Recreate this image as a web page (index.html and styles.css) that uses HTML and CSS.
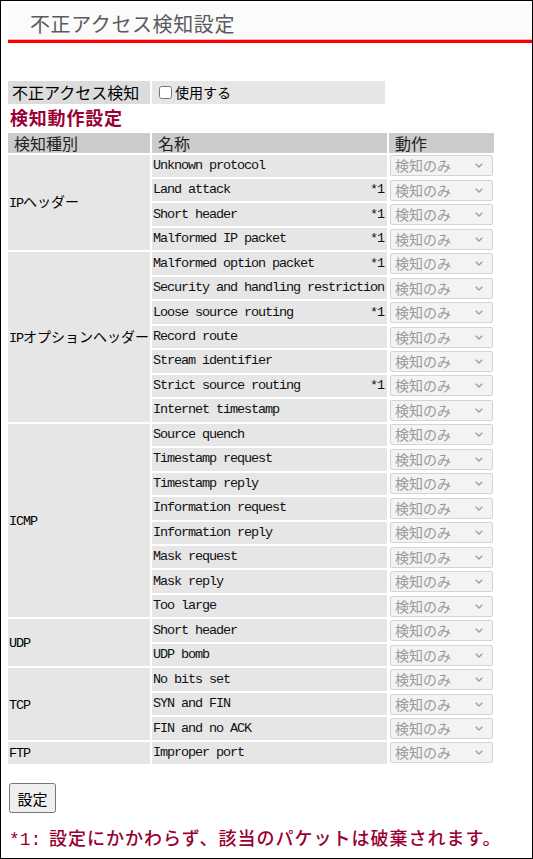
FILE: index.html
```html
<!DOCTYPE html>
<html lang="ja">
<head>
<meta charset="utf-8">
<title>不正アクセス検知設定</title>
<link rel="stylesheet" href="styles.css">
</head>
<body>
<div class="frame">
  <div class="page-head">不正アクセス検知設定</div>

  <table class="enable-table">
    <tr>
      <th class="enable-label">不正アクセス検知</th>
      <td class="enable-value"><label class="check"><input type="checkbox">使用する</label></td>
    </tr>
  </table>

  <h2 class="section-title">検知動作設定</h2>

  <table class="rules">
    <thead>
      <tr>
        <th class="c-kind">検知種別</th>
        <th class="c-name">名称</th>
        <th class="c-act">動作</th>
      </tr>
    </thead>
    <tbody>
      <tr><td class="kind" rowspan="4"><span class="lat">IP</span>ヘッダー</td><td class="name"><div class="nm"><span>Unknown protocol</span></div></td><td class="act"><span class="sel"><select disabled><option>検知のみ</option></select><svg viewBox="0 0 8 5" width="8" height="5"><path d="M0.7 0.7 L4 4 L7.3 0.7" /></svg></span></td></tr>
      <tr><td class="name"><div class="nm"><span>Land attack</span><span>*1</span></div></td><td class="act"><span class="sel"><select disabled><option>検知のみ</option></select><svg viewBox="0 0 8 5" width="8" height="5"><path d="M0.7 0.7 L4 4 L7.3 0.7" /></svg></span></td></tr>
      <tr><td class="name"><div class="nm"><span>Short header</span><span>*1</span></div></td><td class="act"><span class="sel"><select disabled><option>検知のみ</option></select><svg viewBox="0 0 8 5" width="8" height="5"><path d="M0.7 0.7 L4 4 L7.3 0.7" /></svg></span></td></tr>
      <tr><td class="name"><div class="nm"><span>Malformed IP packet</span><span>*1</span></div></td><td class="act"><span class="sel"><select disabled><option>検知のみ</option></select><svg viewBox="0 0 8 5" width="8" height="5"><path d="M0.7 0.7 L4 4 L7.3 0.7" /></svg></span></td></tr>

      <tr><td class="kind" rowspan="7"><span class="lat">IP</span>オプションヘッダー</td><td class="name"><div class="nm"><span>Malformed option packet</span><span>*1</span></div></td><td class="act"><span class="sel"><select disabled><option>検知のみ</option></select><svg viewBox="0 0 8 5" width="8" height="5"><path d="M0.7 0.7 L4 4 L7.3 0.7" /></svg></span></td></tr>
      <tr><td class="name"><div class="nm"><span>Security and handling restriction</span></div></td><td class="act"><span class="sel"><select disabled><option>検知のみ</option></select><svg viewBox="0 0 8 5" width="8" height="5"><path d="M0.7 0.7 L4 4 L7.3 0.7" /></svg></span></td></tr>
      <tr><td class="name"><div class="nm"><span>Loose source routing</span><span>*1</span></div></td><td class="act"><span class="sel"><select disabled><option>検知のみ</option></select><svg viewBox="0 0 8 5" width="8" height="5"><path d="M0.7 0.7 L4 4 L7.3 0.7" /></svg></span></td></tr>
      <tr><td class="name"><div class="nm"><span>Record route</span></div></td><td class="act"><span class="sel"><select disabled><option>検知のみ</option></select><svg viewBox="0 0 8 5" width="8" height="5"><path d="M0.7 0.7 L4 4 L7.3 0.7" /></svg></span></td></tr>
      <tr><td class="name"><div class="nm"><span>Stream identifier</span></div></td><td class="act"><span class="sel"><select disabled><option>検知のみ</option></select><svg viewBox="0 0 8 5" width="8" height="5"><path d="M0.7 0.7 L4 4 L7.3 0.7" /></svg></span></td></tr>
      <tr><td class="name"><div class="nm"><span>Strict source routing</span><span>*1</span></div></td><td class="act"><span class="sel"><select disabled><option>検知のみ</option></select><svg viewBox="0 0 8 5" width="8" height="5"><path d="M0.7 0.7 L4 4 L7.3 0.7" /></svg></span></td></tr>
      <tr><td class="name"><div class="nm"><span>Internet timestamp</span></div></td><td class="act"><span class="sel"><select disabled><option>検知のみ</option></select><svg viewBox="0 0 8 5" width="8" height="5"><path d="M0.7 0.7 L4 4 L7.3 0.7" /></svg></span></td></tr>

      <tr><td class="kind" rowspan="8"><span class="lat">ICMP</span></td><td class="name"><div class="nm"><span>Source quench</span></div></td><td class="act"><span class="sel"><select disabled><option>検知のみ</option></select><svg viewBox="0 0 8 5" width="8" height="5"><path d="M0.7 0.7 L4 4 L7.3 0.7" /></svg></span></td></tr>
      <tr><td class="name"><div class="nm"><span>Timestamp request</span></div></td><td class="act"><span class="sel"><select disabled><option>検知のみ</option></select><svg viewBox="0 0 8 5" width="8" height="5"><path d="M0.7 0.7 L4 4 L7.3 0.7" /></svg></span></td></tr>
      <tr><td class="name"><div class="nm"><span>Timestamp reply</span></div></td><td class="act"><span class="sel"><select disabled><option>検知のみ</option></select><svg viewBox="0 0 8 5" width="8" height="5"><path d="M0.7 0.7 L4 4 L7.3 0.7" /></svg></span></td></tr>
      <tr><td class="name"><div class="nm"><span>Information request</span></div></td><td class="act"><span class="sel"><select disabled><option>検知のみ</option></select><svg viewBox="0 0 8 5" width="8" height="5"><path d="M0.7 0.7 L4 4 L7.3 0.7" /></svg></span></td></tr>
      <tr><td class="name"><div class="nm"><span>Information reply</span></div></td><td class="act"><span class="sel"><select disabled><option>検知のみ</option></select><svg viewBox="0 0 8 5" width="8" height="5"><path d="M0.7 0.7 L4 4 L7.3 0.7" /></svg></span></td></tr>
      <tr><td class="name"><div class="nm"><span>Mask request</span></div></td><td class="act"><span class="sel"><select disabled><option>検知のみ</option></select><svg viewBox="0 0 8 5" width="8" height="5"><path d="M0.7 0.7 L4 4 L7.3 0.7" /></svg></span></td></tr>
      <tr><td class="name"><div class="nm"><span>Mask reply</span></div></td><td class="act"><span class="sel"><select disabled><option>検知のみ</option></select><svg viewBox="0 0 8 5" width="8" height="5"><path d="M0.7 0.7 L4 4 L7.3 0.7" /></svg></span></td></tr>
      <tr><td class="name"><div class="nm"><span>Too large</span></div></td><td class="act"><span class="sel"><select disabled><option>検知のみ</option></select><svg viewBox="0 0 8 5" width="8" height="5"><path d="M0.7 0.7 L4 4 L7.3 0.7" /></svg></span></td></tr>

      <tr><td class="kind" rowspan="2"><span class="lat">UDP</span></td><td class="name"><div class="nm"><span>Short header</span></div></td><td class="act"><span class="sel"><select disabled><option>検知のみ</option></select><svg viewBox="0 0 8 5" width="8" height="5"><path d="M0.7 0.7 L4 4 L7.3 0.7" /></svg></span></td></tr>
      <tr><td class="name"><div class="nm"><span>UDP bomb</span></div></td><td class="act"><span class="sel"><select disabled><option>検知のみ</option></select><svg viewBox="0 0 8 5" width="8" height="5"><path d="M0.7 0.7 L4 4 L7.3 0.7" /></svg></span></td></tr>

      <tr><td class="kind" rowspan="3"><span class="lat">TCP</span></td><td class="name"><div class="nm"><span>No bits set</span></div></td><td class="act"><span class="sel"><select disabled><option>検知のみ</option></select><svg viewBox="0 0 8 5" width="8" height="5"><path d="M0.7 0.7 L4 4 L7.3 0.7" /></svg></span></td></tr>
      <tr><td class="name"><div class="nm"><span>SYN and FIN</span></div></td><td class="act"><span class="sel"><select disabled><option>検知のみ</option></select><svg viewBox="0 0 8 5" width="8" height="5"><path d="M0.7 0.7 L4 4 L7.3 0.7" /></svg></span></td></tr>
      <tr><td class="name"><div class="nm"><span>FIN and no ACK</span></div></td><td class="act"><span class="sel"><select disabled><option>検知のみ</option></select><svg viewBox="0 0 8 5" width="8" height="5"><path d="M0.7 0.7 L4 4 L7.3 0.7" /></svg></span></td></tr>

      <tr><td class="kind"><span class="lat">FTP</span></td><td class="name"><div class="nm"><span>Improper port</span></div></td><td class="act"><span class="sel"><select disabled><option>検知のみ</option></select><svg viewBox="0 0 8 5" width="8" height="5"><path d="M0.7 0.7 L4 4 L7.3 0.7" /></svg></span></td></tr>
    </tbody>
  </table>

  <button class="submit" type="button">設定</button>

  <p class="note"><span class="note-mark">*1:</span>設定にかかわらず、該当のパケットは破棄されます。</p>
</div>
</body>
</html>
```

FILE: styles.css
```css
html, body {
  margin: 0;
  padding: 0;
  background: #fff;
}

body {
  font-family: "Noto Sans CJK JP", "Liberation Sans", sans-serif;
  color: #000;
}

.frame {
  box-sizing: border-box;
  width: 533px;
  height: 859px;
  border: 1px solid #000;
  padding: 3px 0 0 7px;
  overflow: hidden;
}

.page-head {
  height: 32px;
  padding: 4px 0 0 22px;
  line-height: 32px;
  font-size: 20px;
  letter-spacing: 0.6px;
  color: #5a5a5a;
  background: #fbfbfb;
  border-bottom: 3px solid #ff0000;
  box-shadow: inset 0 -1px 0 #f7b4b4;
  white-space: nowrap;
}

.enable-table {
  border-collapse: separate;
  border-spacing: 2px;
  margin: 36px 0 0 -2px;
}

.enable-label {
  box-sizing: border-box;
  width: 142px;
  height: 22px;
  padding: 0 0 0 4px;
  background: #dcdcdc;
  font-size: 16px;
  font-weight: normal;
  text-align: left;
  white-space: nowrap;
  line-height: 22px;
}

.enable-value {
  box-sizing: border-box;
  width: 233px;
  height: 22px;
  padding: 0 0 0 3px;
  background: #e6e6e6;
  font-size: 14px;
  line-height: 22px;
}

.check {
  display: inline-flex;
  align-items: center;
}

.check input {
  margin: 0 3px 0 4px;
  width: 13px;
  height: 13px;
}

.section-title {
  margin: 0;
  font-size: 18px;
  font-weight: bold;
  letter-spacing: 0.8px;
  line-height: 22px;
  color: #990033;
  padding-left: 2px;
}

.rules {
  border-collapse: separate;
  border-spacing: 2px;
  margin: 3px 0 0 -2px;
  table-layout: fixed;
}

.rules th {
  box-sizing: border-box;
  height: 20px;
  padding: 0 0 0 6px;
  background: #cccccc;
  font-size: 16px;
  font-weight: normal;
  text-align: left;
  line-height: 20px;
  color: #222;
  white-space: nowrap;
}

.c-kind { width: 142px; }
.c-name { width: 233px; }
.c-act { width: 105px; }

.rules td {
  box-sizing: border-box;
  height: 22.48px;
  padding: 0 1px;
  white-space: nowrap;
  vertical-align: middle;
}

.kind {
  background: #e6e6e6;
  font-size: 14px;
  line-height: 16px;
}

.name {
  background: #e6e6e6;
}

.lat,
.nm {
  font-family: "Liberation Mono", "DejaVu Sans Mono", monospace;
  font-size: 13.5px;
  letter-spacing: -1.1px;
}

.nm {
  display: flex;
  justify-content: space-between;
  padding-right: 2px;
  line-height: 16px;
  color: #111;
}

.rules td.act {
  padding: 0 0 0 1px;
}

.sel {
  position: relative;
  display: block;
  width: 103px;
  height: 21px;
}

.sel select {
  -webkit-appearance: none;
  appearance: none;
  display: block;
  box-sizing: border-box;
  width: 103px;
  height: 21px;
  margin: 0;
  padding: 0 0 1px 4px;
  font-family: "Noto Sans CJK JP", sans-serif;
  font-size: 14px;
  line-height: 19px;
  color: #9a9a9a;
  background: #f3f3f3;
  border: 1px solid #d4d4d4;
  border-radius: 2px;
  opacity: 1;
}

.sel svg {
  position: absolute;
  right: 10px;
  top: 8px;
  fill: none;
  stroke: #a0a0a0;
  stroke-width: 1.4;
}

.submit {
  display: block;
  margin: 17px 0 0 1px;
  box-sizing: border-box;
  width: 47px;
  height: 30px;
  padding: 0;
  font-family: "Noto Sans CJK JP", sans-serif;
  font-size: 15px;
  color: #000;
}

.note {
  margin: 12px 0 0 1px;
  font-size: 18px;
  font-weight: 500;
  line-height: 24px;
  color: #990033;
  letter-spacing: 1px;
  white-space: nowrap;
}

.note-mark {
  display: inline-block;
  width: 40px;
  font-family: "Liberation Mono", monospace;
  letter-spacing: 0;
}
```
